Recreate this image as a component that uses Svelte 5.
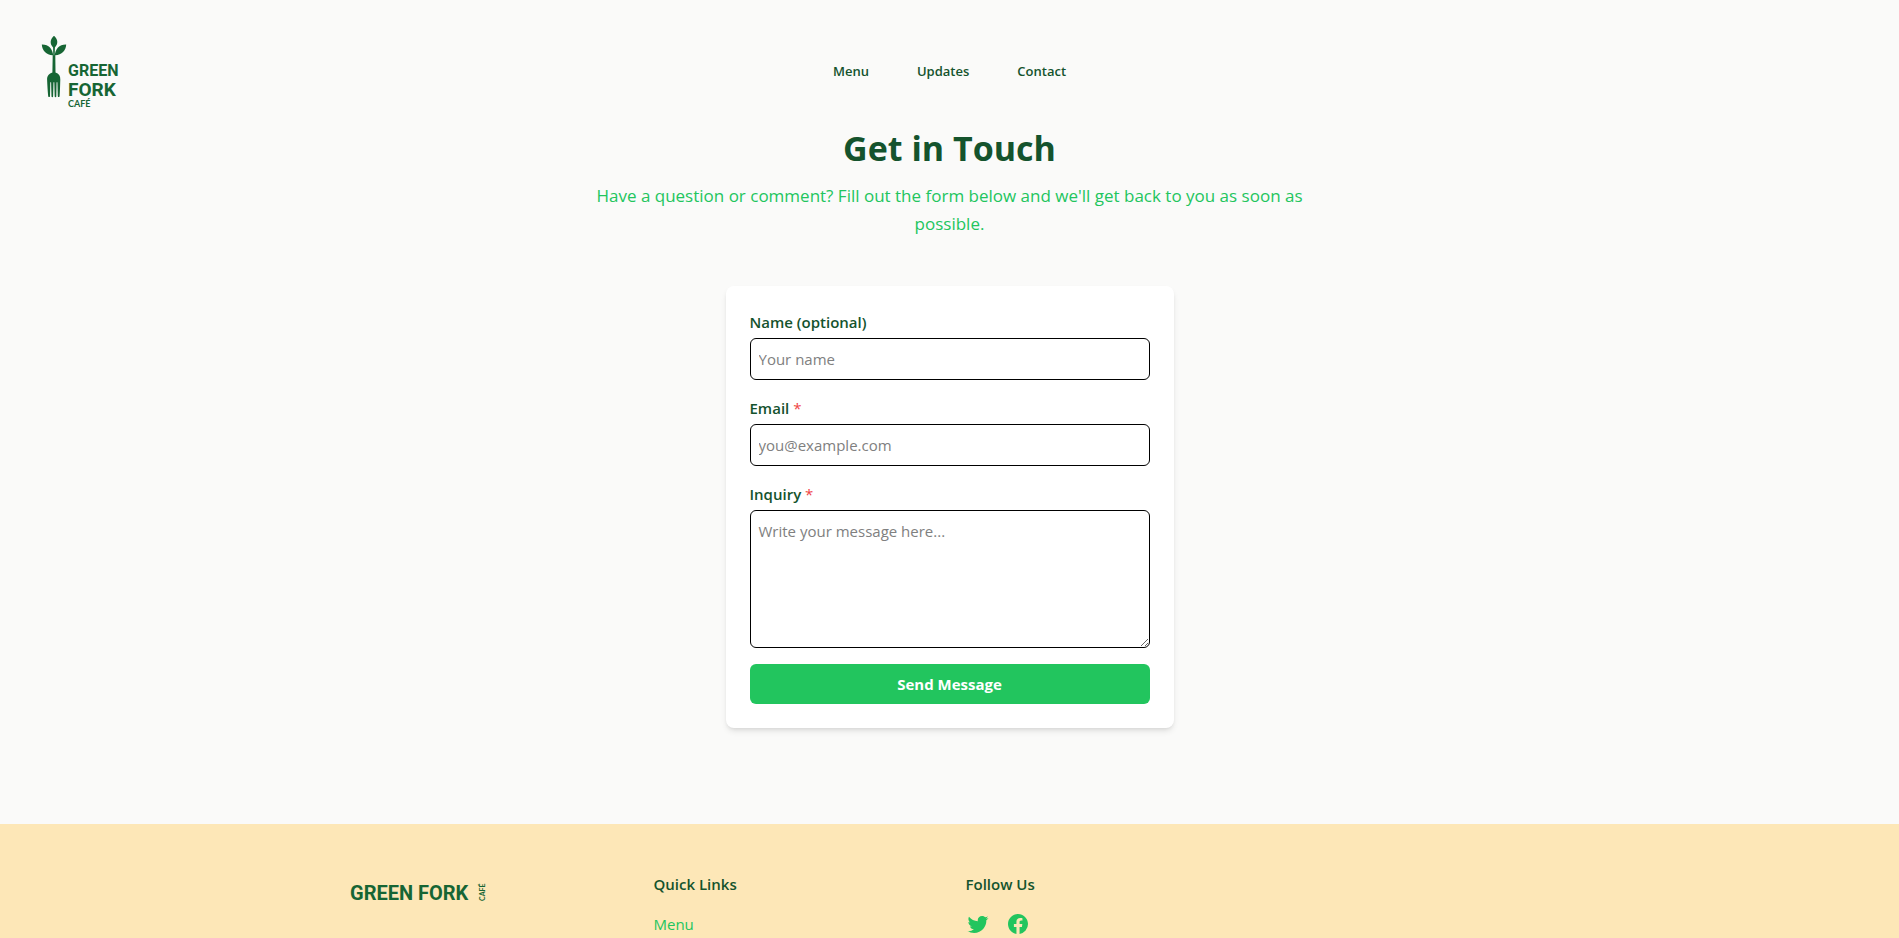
<script>
  const navLinks = ['Menu', 'Updates', 'Contact'];
</script>

<header class="site-header">
  <a class="brand" href="#home" aria-label="Green Fork Café">
    <svg class="brand-mark" viewBox="2 -9 110 110" aria-hidden="true">
      <path d="M24 10.800C28.300 14.500 28.200 19 24.900 22.500L24.700 31C25.200 23.500 29.500 19.200 36.200 19.400C35.900 25.800 31.800 29.600 25.300 30.300L25.500 47.500C28.800 48.600 30.500 50.800 30.300 54.500C30.100 60 30 66 29.600 71.200C29.400 72.400 27.900 72.400 27.800 71.200L27.400 57.200H26.600L26.300 71.400C26.200 72.500 24.800 72.500 24.700 71.400L24.300 57.200H23.500L23.100 71.400C23 72.500 21.600 72.500 21.500 71.400L21.100 57.200H20.300L20 71.200C19.900 72.400 18.400 72.400 18.200 71.200C17.700 66 17.300 60 17.100 54.500C17 50.800 19.100 48.600 22.400 47.500L22.700 30.300C16.200 29.600 12.200 25.800 11.800 19.400C18.500 19.200 22.800 23.500 23.300 31L23.100 22.500C19.800 19 19.700 14.500 24 10.800Z" />
      <text class="word" x="38" y="51" font-size="16">GREEN</text>
      <text class="word" x="38" y="71" font-size="19">FORK</text>
      <text class="cafe" x="38" y="82" font-size="9">CAFÉ</text>
    </svg>
  </a>
  <nav class="main-nav" aria-label="Main">
    {#each navLinks as link}
      <a href={`#${link.toLowerCase()}`}>{link}</a>
    {/each}
  </nav>
</header>

<main>
  <section class="intro">
    <h1>Get in Touch</h1>
    <p>Have a question or comment? Fill out the form below and we'll get back to you as soon as possible.</p>
  </section>

  <form class="card" onsubmit={(e) => e.preventDefault()}>
    <div class="field">
      <label for="name">Name (optional)</label>
      <input id="name" type="text" placeholder="Your name" />
    </div>
    <div class="field">
      <label for="email">Email <span class="required">*</span></label>
      <input id="email" type="email" placeholder="you@example.com" required />
    </div>
    <div class="field">
      <label for="inquiry">Inquiry <span class="required">*</span></label>
      <textarea id="inquiry" rows="5" placeholder="Write your message here..." required></textarea>
    </div>
    <button type="submit">Send Message</button>
  </form>
</main>

<footer>
  <div class="footer-grid">
    <div>
      <svg class="footer-logo" viewBox="0 0 152 48" role="img" aria-label="Green Fork Café">
        <text class="word" x="8" y="28" font-size="20">GREEN FORK</text>
        <text class="cafe" transform="translate(143 29) rotate(-90)" font-size="7">CAFÉ</text>
      </svg>
    </div>
    <div>
      <h2>Quick Links</h2>
      <ul>
        {#each navLinks as link}
          <li><a href={`#${link.toLowerCase()}`}>{link}</a></li>
        {/each}
      </ul>
    </div>
    <div>
      <h2>Follow Us</h2>
      <div class="social">
        <a href="#twitter" aria-label="Twitter">
          <svg viewBox="0 0 24 24" aria-hidden="true">
            <path d="M22.460 6c-.77.35-1.600.58-2.460.69.88-.53 1.560-1.370 1.880-2.380-.83.5-1.750.85-2.720 1.050C18.370 4.500 17.260 4 16 4c-2.350 0-4.270 1.920-4.270 4.290 0 .34.04.67.11.98C8.280 9.090 5.110 7.380 3 4.790c-.37.63-.58 1.370-.58 2.150 0 1.490.75 2.810 1.910 3.560-.71 0-1.370-.2-1.950-.5v.03c0 2.080 1.480 3.820 3.440 4.210a4.220 4.220 0 0 1-1.930.07 4.280 4.280 0 0 0 4 2.980 8.521 8.521 0 0 1-5.330 1.840c-.34 0-.68-.02-1.020-.06C3.440 20.290 5.700 21 8.120 21 16 21 20.330 14.460 20.330 8.790c0-.19 0-.37-.01-.56.84-.6 1.560-1.360 2.140-2.230z" />
          </svg>
        </a>
        <a href="#facebook" aria-label="Facebook">
          <svg viewBox="0 0 24 24" aria-hidden="true">
            <path d="M12 2.040C6.500 2.040 2 6.530 2 12.060C2 17.060 5.660 21.210 10.440 21.960V14.960H7.900V12.060H10.440V9.850C10.440 7.340 11.930 5.960 14.220 5.960C15.310 5.960 16.450 6.150 16.450 6.150V8.620H15.190C13.950 8.620 13.560 9.390 13.560 10.180V12.060H16.340L15.890 14.960H13.560V21.960A10 10 0 0 0 22 12.060C22 6.530 17.500 2.040 12 2.040Z" />
          </svg>
        </a>
      </div>
    </div>
  </div>
</footer>

<style>
  :global(body) {
    margin: 0;
    background: #fafaf9;
    font-family: 'Segoe UI', 'Open Sans', 'Noto Sans', sans-serif;
    font-size: 16px;
    line-height: 24px;
    color: #166534;
  }

  * {
    box-sizing: border-box;
  }

  a {
    color: inherit;
    text-decoration: none;
  }

  .word {
    font-family: 'Roboto', sans-serif;
    font-weight: 700;
  }

  .cafe {
    font-family: 'Lato', sans-serif;
    font-weight: 700;
  }

  .site-header {
    display: grid;
    grid-template-columns: 1fr auto 1fr;
    align-items: center;
    padding: 16px 32px 0;
  }

  .brand {
    justify-self: start;
  }

  .brand-mark {
    display: block;
    width: 110px;
    height: 110px;
    fill: #166534;
  }

  .main-nav {
    display: flex;
    gap: 48px;
    font-size: 13px;
    line-height: 20px;
    font-weight: 600;
    color: #14532d;
  }

  .intro {
    max-width: 768px;
    margin: 0 auto 48px;
    padding: 0 16px;
    text-align: center;
  }

  h1 {
    margin: 0 0 12px;
    font-size: 34px;
    line-height: 44px;
    font-weight: 700;
    color: #14532d;
  }

  .intro p {
    margin: 0;
    font-size: 17px;
    line-height: 28px;
    color: #22c55e;
  }

  .card {
    display: flex;
    flex-direction: column;
    gap: 16px;
    max-width: 448px;
    margin: 0 auto 96px;
    padding: 24px;
    background: #fff;
    border-radius: 8px;
    box-shadow: 0 4px 6px -1px rgb(0 0 0 / 0.1), 0 2px 4px -2px rgb(0 0 0 / 0.1);
  }

  .field {
    display: flex;
    flex-direction: column;
    gap: 4px;
  }

  label {
    font-size: 15px;
    font-weight: 600;
    color: #14532d;
  }

  .required {
    color: #ef4444;
    font-weight: 400;
  }

  input,
  textarea {
    display: block;
    width: 100%;
    margin: 0;
    padding: 8px;
    font: inherit;
    font-size: 15px;
    line-height: 24px;
    color: #14532d;
    background: #fff;
    border: 1px solid #000;
    border-radius: 6px;
  }

  input {
    height: 42px;
  }

  textarea {
    resize: vertical;
  }

  input::placeholder,
  textarea::placeholder {
    color: #808080;
    opacity: 1;
  }

  button {
    padding: 8px 16px;
    font: inherit;
    font-size: 15px;
    font-weight: 700;
    line-height: 24px;
    color: #fff;
    background: #22c55e;
    border: 0;
    border-radius: 6px;
    cursor: pointer;
  }

  footer {
    padding: 48px 32px;
    background: #fde7b7;
  }

  .footer-grid {
    display: grid;
    grid-template-columns: repeat(4, 1fr);
    gap: 32px;
    max-width: 1216px;
    margin: 0 auto;
  }

  .footer-logo {
    display: block;
    width: 152px;
    height: 48px;
    fill: #166534;
  }

  h2 {
    margin: 0 0 16px;
    font-size: 15px;
    line-height: 24px;
    font-weight: 600;
    color: #14532d;
  }

  ul {
    display: flex;
    flex-direction: column;
    gap: 8px;
    margin: 0;
    padding: 0;
    list-style: none;
    font-size: 15px;
    color: #22c55e;
  }

  .social {
    display: flex;
    gap: 16px;
    color: #22c55e;
  }

  .social svg {
    display: block;
    width: 24px;
    height: 24px;
    fill: currentColor;
  }
</style>
